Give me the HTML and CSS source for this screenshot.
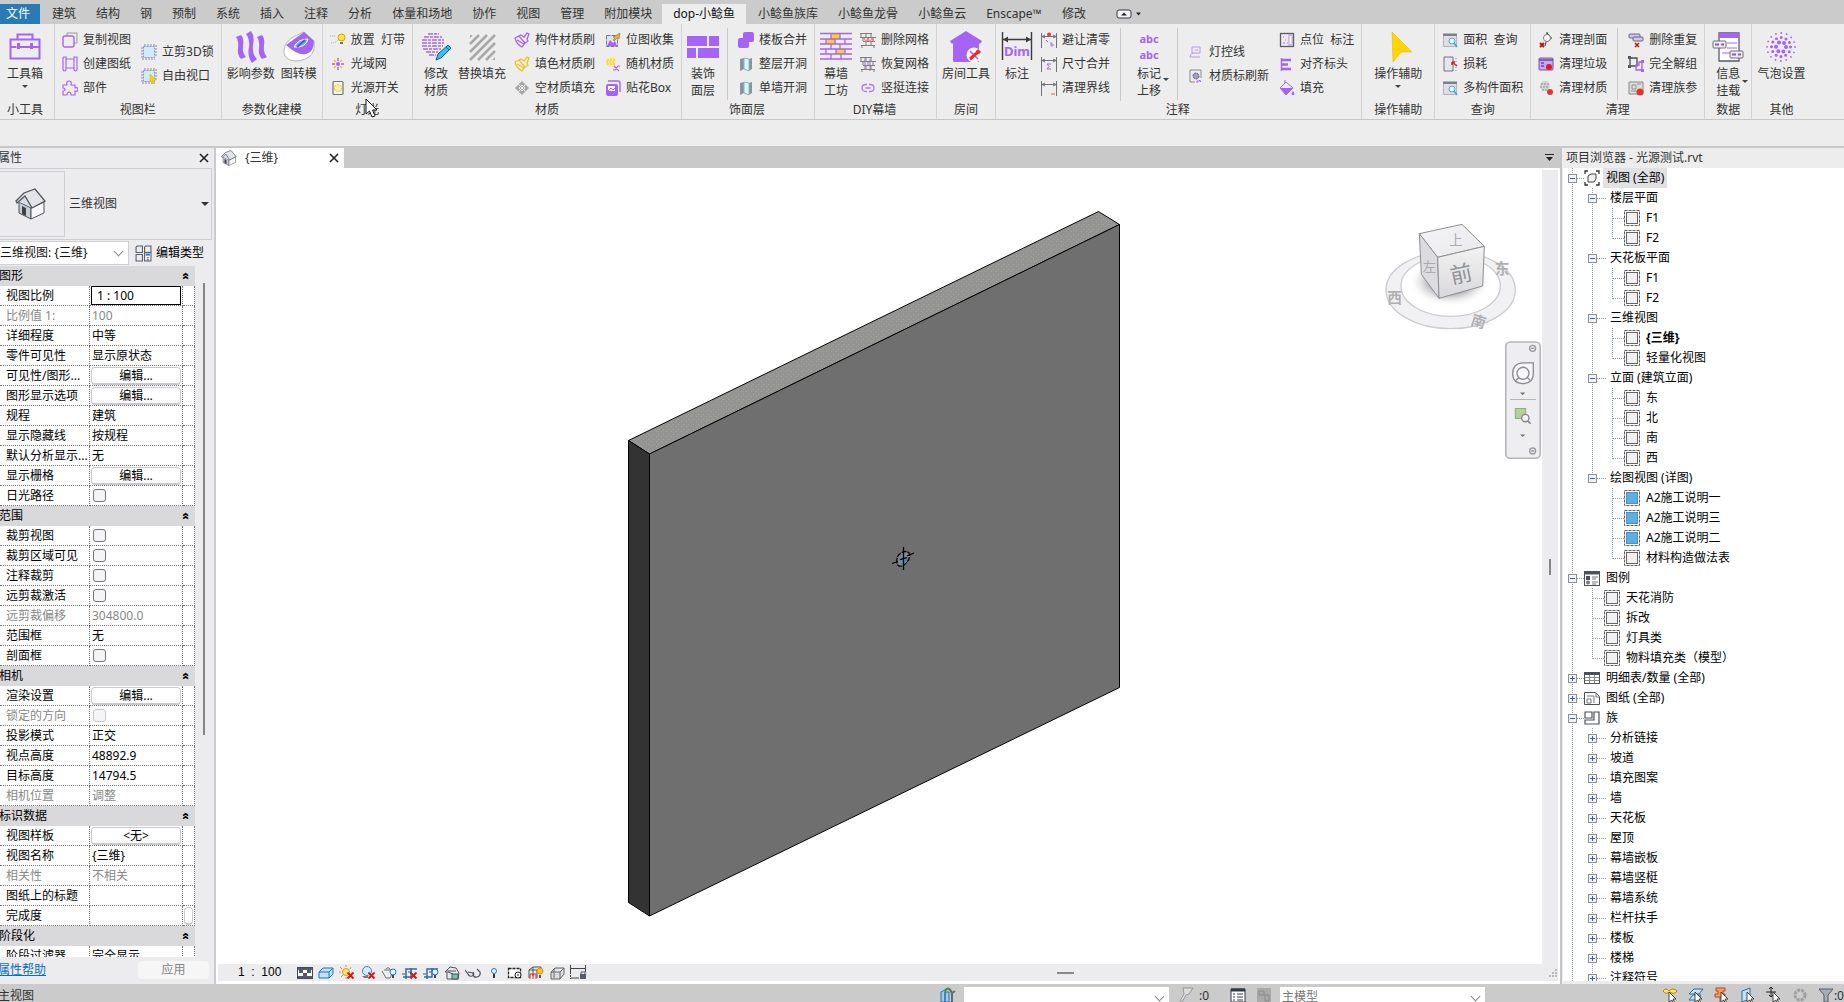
FILE: index.html
```html
<!DOCTYPE html>
<html lang="zh-CN">
<head>
<meta charset="utf-8">
<title>光源测试.rvt - {三维}</title>
<link rel="stylesheet" href="styles.css">
</head>
<body>
<svg class="defs" aria-hidden="true">
  <defs>
    <linearGradient id="cubeTop" x1="0" y1="0" x2="1" y2="1"><stop offset="0" stop-color="#f4f4f6"/><stop offset="1" stop-color="#e9e9ec"/></linearGradient>
    <linearGradient id="cubeFront" x1="0" y1="0" x2="0" y2="1"><stop offset="0" stop-color="#f3f3f3"/><stop offset="1" stop-color="#d8d8db"/></linearGradient>
    <radialGradient id="cubeShade"><stop offset="0.5" stop-color="#b4b4b8"/><stop offset="1" stop-color="#fff" stop-opacity="0"/></radialGradient>
    <pattern id="speckTop" width="5" height="5" patternUnits="userSpaceOnUse"><rect width="5" height="5" fill="#949495"/><path d="M1 1h1v1H1zM3 4h1v1H3z" fill="#a9a690"/></pattern>
  </defs>
  <symbol id="copy" viewBox="0 0 16 16"><path d="M5 4V1h10v10h-3" fill="none" stroke="#999"/><rect x="1" y="4" width="11" height="11" rx="2" fill="none" stroke="#a564f7" stroke-width="1.4"/></symbol>
  <symbol id="sheet" viewBox="0 0 16 16"><path d="M4 3h8M4 12h8M1 1h3v12M1 1v12q0 2 1.500 2T4 13M12 2v11q0 2 1.500 2T15 13V1h-3z" fill="none" stroke="#a564f7" stroke-width="1.2"/></symbol>
  <symbol id="puzzle" viewBox="0 0 16 16"><path d="M1 5h4q-1-4 2-4t2 4h4v3q3-1 3 1.500T13 11v4H9q0-3-2-3t-2 3H1v-4q2 0 2-1.500T1 8z" fill="none" stroke="#a564f7" stroke-width="1.200"/></symbol>
  <symbol id="crop" viewBox="0 0 16 16"><path d="M1 3v12h13M3 1h12v12" fill="none" stroke="#8e8e96" stroke-dasharray="2 1"/><rect x="2.500" y="2.500" width="11" height="11" fill="#cdeef5" stroke="#a584e8" stroke-dasharray="2 1"/></symbol>
  <symbol id="cropsel" viewBox="0 0 16 16"><use href="#crop"/><path d="M9 6l6 6-3 .5L13 16l-4-3z" fill="#ffd000" stroke="#e0a800" stroke-width=".5"/></symbol>
  <symbol id="bulb" viewBox="0 0 16 16"><path d="M0 4h6M1 11q4 0 7-3" fill="none" stroke="#b88cf0" stroke-dasharray="1 1"/><circle cx="11.500" cy="5.500" r="3.500" fill="#ffe34a" stroke="#d9a400"/><path d="M10 10h3v2h-3z" fill="#8c7430"/></symbol>
  <symbol id="burst" viewBox="0 0 16 16"><path d="M8 2v3M8 11v3M2 8h3M11 8h3" stroke="#a564f7" stroke-width="1.500"/><path d="M4 4l2 2M10 10l2 2M12 4l-2 2M6 10l-2 2" stroke="#f0c51c" stroke-width="1.500"/><circle cx="8" cy="8" r="2" fill="#a564f7"/></symbol>
  <symbol id="switch" viewBox="0 0 16 16"><rect x="3" y="1.500" width="10" height="13" rx="1" fill="#f6f6ee" stroke="#70757d" stroke-width="1.200"/><circle cx="8" cy="8" r="3.500" fill="#fff0a0" stroke="#e9b820" stroke-dasharray="2 1"/></symbol>
  <symbol id="brush" viewBox="0 0 16 16"><path d="M1 6l4-2 6 7-3 4Q3 13 1 6zM5 4l2-1 3 2 3-4 2 1-2 5 1 2-3 2M3 8l7 4" fill="none" stroke="currentColor" stroke-width="1.300"/></symbol>
  <symbol id="diamond" viewBox="0 0 16 16"><path d="M8 1l7 7-7 7-7-7z" fill="#a7a7a7"/><path d="M4.500 4.500l7 7M11.500 4.500l-7 7M8 5l3 3-3 3-3-3z" fill="none" stroke="#eee"/></symbol>
  <symbol id="collect" viewBox="0 0 16 16"><rect x="1.500" y="3.500" width="11" height="11" fill="#e6e1f2" stroke="#777984" stroke-dasharray="4 1"/><path d="M2 14l3-6 3 3 2-2 2 5z" fill="#a564f7"/><path d="M8 5l7-4-1 6-2-1-3 3-1-1 2-2z" fill="#e8b80a" stroke="#676767" stroke-width=".5"/></symbol>
  <symbol id="random" viewBox="0 0 16 16"><circle cx="6" cy="6" r="5" fill="#ffe893"/><path d="M2 4h8M1 6h9M2 8h8" stroke="#f0c51c" stroke-dasharray="2 1"/><path d="M8 14h2l3-4h2M9 10l5 5" fill="none" stroke="#a564f7" stroke-width="1.200"/></symbol>
  <symbol id="decal" viewBox="0 0 16 16"><path d="M3 1h10q2 0 2 2v9" fill="none" stroke="#a564f7" stroke-width="1.400"/><rect x="1" y="4" width="12" height="12" rx="2" fill="#a564f7"/><rect x="3" y="6" width="7" height="5" fill="#fff"/><path d="M3 11l3-3 2 2 3-3" fill="none" stroke="#a564f7"/></symbol>
  <symbol id="union" viewBox="0 0 16 16"><path d="M7 0h7q2 0 2 2v6q0 2-2 2h-3v4q0 2-2 2H2q-2 0-2-2V8q0-2 2-2h3V2q0-2 2-2z" fill="#a564f7"/></symbol>
  <symbol id="opening" viewBox="0 0 16 16"><path d="M2 3l4-1v11l-4 2zM11 3l3-1v11l-3 2z" fill="#8d9298"/><path d="M6 2l5 1v12l-5-2z" fill="#dff5f8" stroke="#7ebccb"/></symbol>
  <symbol id="brick" viewBox="0 0 16 16"><path d="M0 1.500h12M0 5.500h16M3 9.500h12M1 13.500h14M1 2v3M6 2v3M11 2v3M3 6v3M8 6v3M13 6v3M6 10v3M11 10v3M2 14v2M14 14v2" stroke="#7d7c85" fill="none"/></symbol>
  <symbol id="brickdel" viewBox="0 0 16 16"><use href="#brick"/><path d="M4 6l2 4 2-4 2 4 2-4 2 4" fill="none" stroke="#ff6d6d"/></symbol>
  <symbol id="brickadd" viewBox="0 0 16 16"><use href="#brick"/><path d="M5 2v12M10 3v12" stroke="#9073bb"/></symbol>
  <symbol id="link" viewBox="0 0 16 16"><path d="M7 11.500H6q-4 0-4-3.500t4-3.500h1M9 4.500h1q4 0 4 3.500t-4 3.500H9M5.500 8h5" fill="none" stroke="#a97bf0" stroke-width="1.300"/></symbol>
  <symbol id="dims" viewBox="0 0 16 16"><path d="M.5 1v15M15.500 1v15M1 4.500h14M4 3L1 4.500 4 6M12 3l3 1.500L12 6" fill="none" stroke="#71717b"/></symbol>
  <symbol id="dimavoid" viewBox="0 0 16 16"><use href="#dims"/><circle cx="8" cy="2.500" r="2" fill="#f33"/><path d="M5 8l2 2M10 10v4h2v-2h-2" fill="none" stroke="#a97bf0"/></symbol>
  <symbol id="dimsum" viewBox="0 0 16 16"><use href="#dims"/><path d="M10 8H6l2 2.500L6 13h4" fill="none" stroke="#a564f7"/></symbol>
  <symbol id="dimclean" viewBox="0 0 16 16"><use href="#dims"/><path d="M10 14h4" stroke="#f55"/></symbol>
  <symbol id="lampwire" viewBox="0 0 16 16"><path d="M4 3h8v6H4zM5 9q-3 1-3 4h10M7 6h3" fill="none" stroke="#b899ed"/></symbol>
  <symbol id="matrefresh" viewBox="0 0 16 16"><path d="M7 14H2V2h11v8" fill="none" stroke="#888892"/><circle cx="8" cy="8" r="3" fill="#a99bc8" stroke="#5b5272" stroke-dasharray="2 1"/><path d="M9 15v-2h4M13 14l-2-2" stroke="#a564f7" fill="none"/></symbol>
  <symbol id="point" viewBox="0 0 16 16"><rect x="1.500" y="1.500" width="13" height="13" fill="#efeaf4" stroke="#5b5b66" stroke-width="1.300"/><path d="M4 11h2M6 8h1M4 5h1M8 11h1" stroke="#a564f7"/><rect x="10" y="3" width="3" height="10" fill="#fff" stroke="#b88cf0"/></symbol>
  <symbol id="align" viewBox="0 0 16 16"><path d="M2.500 2v13" stroke="#a564f7" stroke-width="1.500"/><path d="M3 4h9M3 8.500h6M3 13h9" stroke="#a564f7" stroke-width="2.500"/></symbol>
  <symbol id="bucket" viewBox="0 0 16 16"><path d="M1 8l6-6 7 6-7 7zM6 3V0" fill="none" stroke="#a564f7"/><path d="M1 8h13l-7 7zM14 11q3 4 0 4t0-4z" fill="#a564f7"/></symbol>
  <symbol id="area" viewBox="0 0 16 16"><rect x="1.500" y="1.500" width="13" height="13" fill="#dde0e6" stroke="#b4b6bd"/><path d="M1 3h14" stroke="#808089" stroke-width="2"/><circle cx="10" cy="9" r="3" fill="#eaf8ff" stroke="#45a6dc"/><path d="M12 11l3 4" stroke="#45a6dc" stroke-width="1.500"/></symbol>
  <symbol id="loss" viewBox="0 0 16 16"><path d="M2 1h9v14H2z" fill="#e6e6ec" stroke="#74747c"/><path d="M14 2v13" stroke="#a564f7" stroke-dasharray="1 2"/><path d="M10 6l5 4M10 6h3M10 6v3" stroke="#d22" stroke-width="1.500"/></symbol>
  <symbol id="section" viewBox="0 0 16 16"><path d="M9 1l5 5-5 4z" fill="#fff" stroke="#777"/><circle cx="9" cy="6" r="3.500" fill="#fff" stroke="#777"/><path d="M9 0v2M8 10l-1 4" stroke="#333"/><path d="M2 11l4 4M6 11l-4 4" stroke="#b11" stroke-width="1.800"/></symbol>
  <symbol id="trash" viewBox="0 0 16 16"><rect x="1" y="2" width="14" height="12" rx="1" fill="#c6a7f5" stroke="#73569f"/><path d="M1 4h14M3 7h3M3 10h3" stroke="#7048a8" stroke-width="1.500"/><circle cx="11" cy="11" r="3" fill="#e11b1b"/></symbol>
  <symbol id="cleanmat" viewBox="0 0 16 16"><circle cx="7" cy="6" r="5" fill="#d2d2d2"/><path d="M3 4h8M2 7h9M4 10h6" stroke="#929292" stroke-dasharray="2 1"/><circle cx="12" cy="12" r="3" fill="#e3342c"/></symbol>
  <symbol id="dup" viewBox="0 0 16 16"><rect x="1" y="2" width="11" height="4" rx="1" fill="#d3c4ec" stroke="#6c6580"/><rect x="5" y="5" width="10" height="4" rx="1" fill="#d3c4ec" stroke="#6c6580"/><path d="M7 11l4 4M11 11l-4 4" stroke="#c11" stroke-width="1.500"/></symbol>
  <symbol id="ungroup" viewBox="0 0 16 16"><path d="M2 2h7v8H2z" fill="none" stroke="#4c4c58" stroke-width="1.300"/><path d="M8 14v-5h3V6h3v8z" fill="none" stroke="#a564f7" stroke-width="1.400"/><path d="M0 0h3v3H0zM0 9h3v3H0z" fill="#555560"/><path d="M13 4h3v3h-3zM13 13h3v3h-3z" fill="#a564f7"/></symbol>
  <symbol id="cleanfam" viewBox="0 0 16 16"><path d="M1 2h14v12H1z" fill="#ddd" stroke="#888"/><path d="M4 5h4v4H4zM9 4h4M3 11h6" fill="none" stroke="#929292"/><circle cx="12" cy="12" r="3.500" fill="#e3342c"/></symbol>

  <symbol id="toolbox" viewBox="0 0 32 32"><path d="M1.500 8.500h29v19h-29zM1.500 16h6M11 16h10M24 16h6M8.500 8V3.500h15V8" fill="none" stroke="#a564f7" stroke-width="2"/><path d="M8 12h3v6H8zM21 12h3v6h-3z" fill="#a564f7"/></symbol>
  <symbol id="waves" viewBox="0 0 32 32"><path d="M1 6l5-2q3 3 2 10-1 8 3 12l-5 2q-4-4-3-11 1-7-2-11z" fill="#a564f7"/><path d="M11 3l5-3q4 5 2 14-1 9 4 14l-5 4q-5-7-3-16 1-8-3-13zM22 6l5-2q3 3 2 10-1 8 3 12l-5 2q-4-4-3-11 1-7-2-11z" fill="#a564f7"/></symbol>
  <symbol id="map" viewBox="0 0 32 32"><path d="M1 19Q2 11 10 6L21 1l10 9q2 10-5 16-9 6-19 3-7-3-6-10z" fill="#fff" stroke="#b8b8b8"/><path d="M3 14L21 1l10 9q0 11-8 13-8 2-20-9z" fill="#a564f7"/><path d="M11 16q4-8 14-8-2 9-14 8z" fill="#35d4f5" stroke="#fff"/><path d="M14 16l8-7" stroke="#7d3fd0" stroke-width="2"/></symbol>
  <symbol id="material" viewBox="0 0 32 32"><path d="M8 3h11M4 6h18M2 9h22M2 12h22M2 15h21M3 18h18M6 21h12M9 24h7" fill="none" stroke="#a36be8" stroke-width="1.500" stroke-dasharray="5 1 3 1"/><path d="M16 29l2-6 10-9 3 3-10 10z" fill="#2cc4f2" stroke="#225b9a"/><path d="M26 16l3 3" stroke="#225b9a"/></symbol>
  <symbol id="hatch" viewBox="0 0 32 32"><path d="M4 13L13 4M4 21L21 4M4 29L29 4M12 29L29 12M20 29l9-9" stroke="#a6a8aa" stroke-width="2.500"/><path d="M4 4h3l-3 3zM29 29h-3l3-3z" fill="#a6a8aa"/></symbol>
  <symbol id="finish" viewBox="0 0 32 32"><path d="M0 5h20v10H0zM22 5h10v10H22zM0 17h9v10H0zM11 17h21v10H11z" fill="#a564f7"/></symbol>
  <symbol id="curtain" viewBox="0 0 32 32"><path d="M11 3h9v5h-9zM6 8h9v5H6zM16 18h9v5h-9z" fill="#ffd21a"/><path d="M0 2.500h32M0 8h32M0 13h32M0 18h32M0 23h32M0 28h32M11 3v5M20 3v5M6 8v5M15 8v5M25 8v5M11 13v5M20 13v5M6 18v5M16 18v5M25 18v5M11 23v5M21 23v5" stroke="#a564f7" stroke-width="1.300"/></symbol>
  <symbol id="room" viewBox="0 0 32 32"><path d="M16 0l16 10-2 3-1-1v18q0 1-1 1H4q-1 0-1-1V12l-1 1-2-3z" fill="#a564f7"/><circle cx="24" cy="24" r="7.500" fill="#fff"/><path d="M20 20l8 8M28 20l-8 9" stroke="#a564f7" stroke-width="1.500"/><path d="M20 28l8-7M27 19l3 3" stroke="#f22" stroke-width="3"/></symbol>
  <symbol id="arrow" viewBox="0 0 32 32"><path d="M10 1l20 20H19L11 31z" fill="#ffd600" stroke="#e0b300" stroke-width=".5"/></symbol>
  <symbol id="info" viewBox="0 0 32 32"><path d="M7 2h20v28H7z" fill="#fff" stroke="#5a5a66" stroke-width="1.300"/><path d="M7 2h20v5H7z" fill="#a564f7"/><path d="M15 12h10M15 17h10M10 22h8" stroke="#a564f7"/><rect x="1" y="10" width="13" height="7" rx="1" fill="#eee" stroke="#6c6c78"/><rect x="18" y="20" width="13" height="7" rx="1" fill="#eee" stroke="#6c6c78"/><path d="M3 13.500h4M9 13.500h3M20 23.500h4M26 23.500h3" stroke="#8c50e0" stroke-width="2"/></symbol>
  <symbol id="bubble" viewBox="0 0 32 32"><g fill="none" stroke="#a564f7" stroke-linecap="round"><circle cx="16" cy="16" r="5" stroke-width="4" stroke-dasharray="0 5.230"/><circle cx="16" cy="16" r="9.500" stroke-width="3" stroke-dasharray="0 4.970"/><circle cx="16" cy="16" r="14" stroke-width="1.800" stroke-dasharray="0 5.490"/></g></symbol>
  <symbol id="house" viewBox="0 0 32 32"><path d="M4 14l12 6v11L4 25z" fill="#c9ccd4" stroke="#4d525b"/><path d="M16 20l13-6v11l-13 6z" fill="#f7f7fa" stroke="#4d525b"/><path d="M4 14l6-7 8 12z" fill="#d9dbe2"/><path d="M1 13L9 5l11-4 10 12-13 7-7-12-8 7z" fill="#e3e4ea" stroke="#4d525b" stroke-width="1.300"/><path d="M7 18l4 2v8l-4-2z" fill="#3c4048"/></symbol>
  <symbol id="edittype" viewBox="0 0 16 16"><path d="M1 2l1-1h5v6H1zM9 7V2l1-1h5v6M1 9h6v6H1z" fill="none" stroke="#555c66"/><rect x="9" y="7" width="6" height="8" fill="#fff" stroke="#555c66"/><path d="M10 9h4" stroke="#2d79c4" stroke-width="2"/><path d="M11 12h2M11 14h2" stroke="#555c66"/></symbol>

  <symbol id="leaf" viewBox="0 0 16 16"><rect x=".5" y=".5" width="15" height="15" fill="#fff" stroke="#5d5d5d" stroke-dasharray="3 1"/><rect x="2.500" y="2.500" width="11" height="11" fill="#f1f1f3" stroke="#666"/></symbol>
  <symbol id="leafblue" viewBox="0 0 16 16"><rect x=".5" y=".5" width="15" height="15" fill="#fff" stroke="#5d5d5d" stroke-dasharray="3 1"/><rect x="2.500" y="2.500" width="11" height="11" fill="#5faee3" stroke="#4a90c0"/></symbol>
  <symbol id="views" viewBox="0 0 16 16"><path d="M1 4V1h3M12 1h3v3M15 12v3h-3M4 15H1v-3" fill="none" stroke="#333" stroke-width="1.300"/><path d="M4 6l3-2h5v5l-2 3H4z" fill="#f0f0f3" stroke="#444" stroke-linejoin="round"/></symbol>
  <symbol id="legend" viewBox="0 0 16 16"><rect x=".5" y="1.500" width="15" height="14" fill="#fff" stroke="#4b505a"/><path d="M1 3h14" stroke="#4b505a" stroke-width="3"/><path d="M2 6h4v4H2z" fill="#4b505a"/><circle cx="4" cy="12.500" r="2" fill="#777"/><path d="M8 7h6M8 9h4M8 12h6M8 14h4" stroke="#777"/></symbol>
  <symbol id="schedule" viewBox="0 0 16 16"><rect x=".5" y="2.500" width="15" height="11" fill="#fff" stroke="#4b505a"/><path d="M1 4h14" stroke="#4b505a" stroke-width="2"/><path d="M1 7.500h14M1 10.500h14M5.500 5v8M10.500 5v8" stroke="#888"/></symbol>
  <symbol id="drawing" viewBox="0 0 16 16"><path d="M.5 2.500h11l4 4v8H.5z" fill="#fff" stroke="#4b505a"/><path d="M3 6h7v7M3 9h4v4H3zM12 3v4h3" fill="none" stroke="#777"/></symbol>
  <symbol id="family" viewBox="0 0 16 16"><path d="M1 2h7v6H1zM10 2h5v12H1v-4h9z" fill="#fff" stroke="#4b505a" stroke-width="1.200"/></symbol>

  <symbol id="v1" viewBox="0 0 16 16"><rect x=".5" y="2.500" width="15" height="11" fill="#fff" stroke="#444a54"/><path d="M1 3h14v2H1zM2 5h4v3H2zM10 5h4v3h-4zM6 8h4v3H6zM1 11h14v2H1z" fill="#555b66"/></symbol>
  <symbol id="v2" viewBox="0 0 16 16"><path d="M1 7l4-4h10v6l-4 4H1z" fill="#bfe2f7" stroke="#2277b8"/><path d="M1 7h10l4-4M11 7v6" fill="none" stroke="#2277b8"/></symbol>
  <symbol id="redx" viewBox="0 0 16 16"><path d="M8.500 7.500l6 6M14.500 7.500l-6 6" stroke="#c81e1e" stroke-width="2"/></symbol>
  <symbol id="v3" viewBox="0 0 16 16"><circle cx="7" cy="7" r="3.500" fill="#ffe27a" stroke="#e09820"/><path d="M7 0v2M1 2l2 2M0 7h2M2 12l2-2M12 2l-1 2M7 12v2" stroke="#e09820"/><use href="#redx"/></symbol>
  <symbol id="v4" viewBox="0 0 16 16"><circle cx="7" cy="6" r="4.500" fill="#d7ecfa" stroke="#4382b8"/><path d="M2 11h6v2H4z" fill="#777"/><use href="#redx"/></symbol>
  <symbol id="bulbb" viewBox="0 0 16 16"><circle cx="12" cy="7" r="3" fill="#e3f3fd" stroke="#2277b8"/><path d="M11 10h2v3h-2z" fill="#445"/></symbol>
  <symbol id="v5" viewBox="0 0 16 16"><path d="M3 5h8v4l-2 4H5L1 6M5 4q2-3 4 0" fill="#eee" stroke="#666c76"/><use href="#bulbb"/></symbol>
  <symbol id="cropv" viewBox="0 0 16 16"><path d="M4 14V4h11M1 12h8V3" fill="none" stroke="#2a6da8" stroke-width="1.500"/><path d="M0 9h3M6 7h4" stroke="#555"/></symbol>
  <symbol id="v6" viewBox="0 0 16 16"><use href="#cropv"/><use href="#redx"/></symbol>
  <symbol id="v7" viewBox="0 0 16 16"><use href="#cropv"/><use href="#bulbb"/></symbol>
  <symbol id="v8" viewBox="0 0 16 16"><path d="M1 7l5-5 6 1 3 5-1 6H3V7zM4 7l5 2M3 6h9" fill="#e8e9ee" stroke="#4d525b"/><rect x="8" y="9" width="6" height="5" fill="#89b8a8" stroke="#2f5d54"/></symbol>
  <symbol id="v9" viewBox="0 0 16 16"><path d="M0 5l3 4q1 3 4 2t1-4M8 8q0 5 4 4t3-5l-3-3M3 7l5 1" fill="none" stroke="#4d525b" stroke-width="1.200"/></symbol>
  <symbol id="v10" viewBox="0 0 16 16"><circle cx="8" cy="6" r="2.500" fill="#e3f3fd" stroke="#2277b8"/><path d="M7 9h2v4H7z" fill="#334"/></symbol>
  <symbol id="v11" viewBox="0 0 16 16"><path d="M1.500 3.500h12v9h-12z" fill="#fff" stroke="#222" stroke-width="1.300" stroke-dasharray="3 1"/><circle cx="11" cy="10" r="3" fill="#fff" stroke="#222"/><path d="M10 10h2" stroke="#222"/></symbol>
  <symbol id="v12" viewBox="0 0 16 16"><path d="M1 13V5l4-3h8v6M1 5h8v8M5 2v9" fill="none" stroke="#555"/><path d="M2 14v-5h6v5M5 9v5" fill="none" stroke="#c33"/><circle cx="12" cy="6" r="3" fill="#ffc63a" stroke="#e08a10"/><path d="M11 10h2v3h-2z" fill="#555"/></symbol>
  <symbol id="v13" viewBox="0 0 16 16"><path d="M2 7l4-4h9v6l-4 5H2zM2 7h9l4-4M11 7v7M5 4v9" fill="#ddd" stroke="#666"/></symbol>
  <symbol id="v14" viewBox="0 0 16 16"><path d="M.5 0v7M15.500 0v7M1 3.500h14M1 13h8" fill="none" stroke="#444"/><path d="M.5 7v7" stroke="#444" stroke-dasharray="2 1"/><rect x="10" y="9" width="6" height="5" fill="#555b66"/><path d="M11 9V7h4v2" fill="none" stroke="#555b66"/></symbol>

  <symbol id="pick" viewBox="0 0 16 16"><path d="M7 5l7 7h-3l2 4h-2l-1-3-3 2z" fill="#fff" stroke="#333" stroke-width=".9"/></symbol>
  <symbol id="s1" viewBox="0 0 16 16"><path d="M1 5l4-2v12H1zM5 5h4v10H5z" fill="#9dcbe8" stroke="#2a6da8"/><path d="M5 4q3-5 6 0" fill="none" stroke="#3b8a3a" stroke-width="2"/><path d="M12 6v9M10 3l2 3 3-2" fill="none" stroke="#5b6b78" stroke-width="2"/></symbol>
  <symbol id="s2" viewBox="0 0 16 16"><path d="M5 1h10l-4 6-3 1-4 7-2-1 4-7z" fill="#ddd" stroke="#999"/></symbol>
  <symbol id="s3" viewBox="0 0 16 16"><path d="M1 2h14v13H1z" fill="#fff" stroke="#333a44"/><path d="M1 3h14" stroke="#333a44" stroke-width="3"/><path d="M3 7h2M3 10h2M3 13h2M7 7h6M7 10h6M7 13h6" stroke="#333a44"/></symbol>
  <symbol id="s4" viewBox="0 0 16 16"><path d="M1 1h14v15H1z" fill="#aaa"/><path d="M3 4h5v4H3zM9 8h4v6H9z" fill="none" stroke="#888"/></symbol>
  <symbol id="s5" viewBox="0 0 16 16"><path d="M1 4q3-4 6 0 4-4 8 0-3 4-7 1-4 3-7-1z" fill="#ffe36a" stroke="#b58a00"/><use href="#pick"/></symbol>
  <symbol id="s6" viewBox="0 0 16 16"><path d="M6 2h9l-4 5H1zM5 8h8l-3 5H1z" fill="#c6e2f5" stroke="#2a6da8"/><use href="#pick"/></symbol>
  <symbol id="s7" viewBox="0 0 16 16"><path d="M2 1h9v3H9v3h2v3H1V7h3V4H2zM6 10v5" fill="#ff9a62" stroke="#b5481a"/><use href="#pick"/></symbol>
  <symbol id="s8" viewBox="0 0 16 16"><path d="M2 4l8-3v11l-8 3z" fill="#bfe0f5" stroke="#2a6da8"/><use href="#pick"/></symbol>
  <symbol id="s9" viewBox="0 0 16 16"><path d="M5 0v10M0 5h10M3 2l2-2 2 2M3 8l2 2 2-2" fill="none" stroke="#222"/><use href="#pick"/></symbol>
  <symbol id="s10" viewBox="0 0 16 16"><circle cx="8" cy="8" r="5" fill="none" stroke="#a0a0a0" stroke-width="3" stroke-dasharray="3 1"/></symbol>
  <symbol id="s11" viewBox="0 0 16 16"><path d="M1 2h14l-5 6v7H6V8z" fill="#a7adb5" stroke="#555b64"/></symbol>
</svg>

<header>
  <nav class="tabs">
    <button class="tab file">文件</button><button class="tab">建筑</button><button class="tab">结构</button><button class="tab">钢</button><button class="tab">预制</button><button class="tab">系统</button><button class="tab">插入</button><button class="tab">注释</button><button class="tab">分析</button><button class="tab">体量和场地</button><button class="tab">协作</button><button class="tab">视图</button><button class="tab">管理</button><button class="tab">附加模块</button><button class="tab active">dop-小鲶鱼</button><button class="tab">小鲶鱼族库</button><button class="tab">小鲶鱼龙骨</button><button class="tab">小鲶鱼云</button><button class="tab">Enscape™</button><button class="tab">修改</button>
    <button class="minimize" aria-label="最小化功能区"><svg width="26" height="10" viewBox="0 0 26 10"><rect x="1" y="1" width="14" height="8" rx="2" fill="#f4f4f4" stroke="#333b47"/><path d="M5 6.500h6L8 3.500zM20 3.500h5l-2.500 3z" fill="#222"/></svg></button>
  </nav>

  <div class="ribbon">
    <section class="panel first">
      <div class="tools"><button class="big"><svg><use href="#toolbox"/></svg>工具箱<span class="caret"></span></button></div>
      <h2>小工具</h2>
    </section>
    <section class="panel wide">
      <div class="tools">
        <div class="col"><button class="small"><svg><use href="#copy"/></svg>复制视图</button><button class="small"><svg><use href="#sheet"/></svg>创建图纸</button><button class="small"><svg><use href="#puzzle"/></svg>部件</button></div>
        <div class="col next"><button class="small"><svg><use href="#crop"/></svg>立剪3D锁</button><button class="small"><svg><use href="#cropsel"/></svg>自由视口</button></div>
      </div>
      <h2>视图栏</h2>
    </section>
    <section class="panel">
      <div class="tools"><button class="big"><svg><use href="#waves"/></svg>影响参数</button><button class="big after"><svg><use href="#map"/></svg>图转模</button></div>
      <h2>参数化建模</h2>
    </section>
    <section class="panel wide">
      <div class="tools"><div class="col"><button class="small"><svg><use href="#bulb"/></svg>放置 &nbsp;灯带</button><button class="small"><svg><use href="#burst"/></svg>光域网</button><button class="small"><svg><use href="#switch"/></svg>光源开关</button></div></div>
      <h2>灯光</h2>
    </section>
    <section class="panel wide">
      <div class="tools">
        <button class="big"><svg><use href="#material"/></svg>修改<br>材质</button><button class="big after"><svg><use href="#hatch"/></svg>替换填充</button>
        <div class="col near"><button class="small purple"><svg><use href="#brush"/></svg>构件材质刷</button><button class="small yellow"><svg><use href="#brush"/></svg>填色材质刷</button><button class="small"><svg><use href="#diamond"/></svg>空材质填充</button></div>
        <div class="col next"><button class="small"><svg><use href="#collect"/></svg>位图收集</button><button class="small"><svg><use href="#random"/></svg>随机材质</button><button class="small"><svg><use href="#decal"/></svg>贴花Box</button></div>
      </div>
      <h2>材质</h2>
    </section>
    <section class="panel mixed">
      <div class="tools">
        <button class="big"><svg><use href="#finish"/></svg>装饰<br>面层</button>
        <div class="col split near"><button class="small"><svg><use href="#union"/></svg>楼板合并</button><button class="small"><svg><use href="#opening"/></svg>整层开洞</button><button class="small"><svg><use href="#opening"/></svg>单墙开洞</button></div>
      </div>
      <h2>饰面层</h2>
    </section>
    <section class="panel mixed">
      <div class="tools">
        <button class="big"><svg><use href="#curtain"/></svg>幕墙<br>工坊</button>
        <div class="col near"><button class="small"><svg><use href="#brickdel"/></svg>删除网格</button><button class="small"><svg><use href="#brickadd"/></svg>恢复网格</button><button class="small"><svg><use href="#link"/></svg>竖挺连接</button></div>
      </div>
      <h2>DIY幕墙</h2>
    </section>
    <section class="panel">
      <div class="tools"><button class="big"><svg><use href="#room"/></svg>房间工具</button></div>
      <h2>房间</h2>
    </section>
    <section class="panel mixed">
      <div class="tools">
        <button class="big"><svg viewBox="0 0 32 32"><path d="M1.500 1v28M30.500 1v28M2 8.500h28" stroke="#3a3a40" stroke-width="1.400"/><path d="M2 8.500l5-3v6zM30 8.500l-5-3v6z" fill="#3a3a40"/><text x="16" y="25" class="dimtext">Dim</text></svg>标注</button>
        <div class="col near"><button class="small"><svg><use href="#dimavoid"/></svg>避让清零</button><button class="small"><svg><use href="#dimsum"/></svg>尺寸合并</button><button class="small"><svg><use href="#dimclean"/></svg>清理界线</button></div>
        <div class="split"><button class="big tagup"><span class="abc">abc<br>abc</span>标记<br>上移<span class="caret side"></span></button></div>
        <div class="col split"><button class="small"><svg><use href="#lampwire"/></svg>灯控线</button><button class="small"><svg><use href="#matrefresh"/></svg>材质标刷新</button></div>
        <div class="col next"><button class="small"><svg><use href="#point"/></svg>点位 &nbsp;标注</button><button class="small"><svg><use href="#align"/></svg>对齐标头</button><button class="small"><svg><use href="#bucket"/></svg>填充</button></div>
      </div>
      <h2>注释</h2>
    </section>
    <section class="panel roomy">
      <div class="tools"><button class="big"><svg><use href="#arrow"/></svg>操作辅助<span class="caret"></span></button></div>
      <h2>操作辅助</h2>
    </section>
    <section class="panel wide">
      <div class="tools"><div class="col"><button class="small"><svg><use href="#area"/></svg>面积 &nbsp;查询</button><button class="small"><svg><use href="#loss"/></svg>损耗</button><button class="small"><svg><use href="#area"/></svg>多构件面积</button></div></div>
      <h2>查询</h2>
    </section>
    <section class="panel wide">
      <div class="tools">
        <div class="col"><button class="small"><svg><use href="#section"/></svg>清理剖面</button><button class="small"><svg><use href="#trash"/></svg>清理垃圾</button><button class="small"><svg><use href="#cleanmat"/></svg>清理材质</button></div>
        <div class="col split next"><button class="small"><svg><use href="#dup"/></svg>删除重复</button><button class="small"><svg><use href="#ungroup"/></svg>完全解组</button><button class="small"><svg><use href="#cleanfam"/></svg>清理族参</button></div>
      </div>
      <h2>清理</h2>
    </section>
    <section class="panel wide">
      <div class="tools"><button class="big"><svg><use href="#info"/></svg>信息<br>挂载<span class="caret side"></span></button></div>
      <h2>数据</h2>
    </section>
    <section class="panel last">
      <div class="tools"><button class="big"><svg><use href="#bubble"/></svg>气泡设置</button></div>
      <h2>其他</h2>
    </section>
  </div>
  <div class="options"></div>
</header>

<main>
  <aside class="props">
    <div class="ptitle"><span>属性</span><button class="close" aria-label="关闭属性"><svg width="10" height="10" viewBox="0 0 10 10"><path d="M1 1l8 8M9 1L1 9" stroke="#222" stroke-width="1.600"/></svg></button></div>
    <button class="typesel"><span class="thumb"><svg width="32" height="32"><use href="#house"/></svg></span><span class="tname">三维视图</span><span class="tri"></span></button>
    <div class="instance">
      <span class="combo"><select aria-label="实例"><option>三维视图: {三维}</option></select></span>
      <button class="edit"><svg width="17" height="17"><use href="#edittype"/></svg>编辑类型</button>
    </div>
    <div class="grid">
      <table>
        <colgroup><col class="c1"><col class="c2"><col class="c3"></colgroup>
        <tbody>
          <tr class="head"><th colspan="3">图形<span>»</span></th></tr>
          <tr><td><label for="scale">视图比例</label></td><td class="edge"><input type="text" id="scale" value="1 : 100"></td><td></td></tr>
          <tr class="off"><td>比例值 1:</td><td>100</td><td></td></tr>
          <tr><td>详细程度</td><td>中等</td><td></td></tr>
          <tr><td>零件可见性</td><td>显示原状态</td><td></td></tr>
          <tr><td>可见性/图形...</td><td class="edge"><button>编辑...</button></td><td></td></tr>
          <tr><td>图形显示选项</td><td class="edge"><button>编辑...</button></td><td></td></tr>
          <tr><td>规程</td><td>建筑</td><td></td></tr>
          <tr><td>显示隐藏线</td><td>按规程</td><td></td></tr>
          <tr><td>默认分析显示...</td><td>无</td><td></td></tr>
          <tr><td>显示栅格</td><td class="edge"><button>编辑...</button></td><td></td></tr>
          <tr><td><label for="sun">日光路径</label></td><td><input type="checkbox" id="sun"></td><td></td></tr>
          <tr class="head"><th colspan="3">范围<span>»</span></th></tr>
          <tr><td><label for="cv">裁剪视图</label></td><td><input type="checkbox" id="cv"></td><td></td></tr>
          <tr><td><label for="cr">裁剪区域可见</label></td><td><input type="checkbox" id="cr"></td><td></td></tr>
          <tr><td><label for="ca">注释裁剪</label></td><td><input type="checkbox" id="ca"></td><td></td></tr>
          <tr><td><label for="fc">远剪裁激活</label></td><td><input type="checkbox" id="fc"></td><td></td></tr>
          <tr class="off"><td>远剪裁偏移</td><td>304800.0</td><td></td></tr>
          <tr><td>范围框</td><td>无</td><td></td></tr>
          <tr><td><label for="sb">剖面框</label></td><td><input type="checkbox" id="sb"></td><td></td></tr>
          <tr class="head"><th colspan="3">相机<span>»</span></th></tr>
          <tr><td>渲染设置</td><td class="edge"><button>编辑...</button></td><td></td></tr>
          <tr class="off"><td><label for="lo">锁定的方向</label></td><td><input type="checkbox" id="lo" disabled></td><td></td></tr>
          <tr><td>投影模式</td><td>正交</td><td></td></tr>
          <tr><td>视点高度</td><td>48892.9</td><td></td></tr>
          <tr><td>目标高度</td><td>14794.5</td><td></td></tr>
          <tr class="off"><td>相机位置</td><td>调整</td><td></td></tr>
          <tr class="head"><th colspan="3">标识数据<span>»</span></th></tr>
          <tr><td>视图样板</td><td class="edge"><button>&lt;无&gt;</button></td><td></td></tr>
          <tr><td>视图名称</td><td>{三维}</td><td></td></tr>
          <tr class="off"><td>相关性</td><td>不相关</td><td></td></tr>
          <tr><td>图纸上的标题</td><td></td><td></td></tr>
          <tr><td>完成度</td><td></td><td class="edge"><button aria-label="浏览"></button></td></tr>
          <tr class="head"><th colspan="3">阶段化<span>»</span></th></tr>
          <tr><td>阶段过滤器</td><td>完全显示</td><td></td></tr>
        </tbody>
      </table>
      <div class="scroll"><div></div></div>
    </div>
    <div class="pfoot"><a href="#help">属性帮助</a><button disabled>应用</button></div>
  </aside>

  <section class="doc">
    <div class="doctabs">
      <div class="doctab"><svg width="16" height="16"><use href="#house"/></svg><span>{三维}</span><button class="close" aria-label="关闭视图"><svg width="10" height="10" viewBox="0 0 10 10"><path d="M1 1l8 8M9 1L1 9" stroke="#222" stroke-width="1.600"/></svg></button></div>
      <button class="tablist" aria-label="视图列表"><svg width="9" height="8" viewBox="0 0 9 8"><path d="M0 .5h9" stroke="#222"/><path d="M1 3h7L4.500 7z" fill="#222"/></svg></button>
    </div>
    <div class="view">
      <div class="canvas">
        <svg class="wall" width="494" height="708" viewBox="627 210 494 708" role="img" aria-label="三维墙体">
          <g stroke="#000" stroke-width="1" stroke-linejoin="round">
            <path d="M628.500 440.500L1098.500 211.500l21 13-470 229.500z" fill="url(#speckTop)"/>
            <path d="M628.500 440.500l21 13.500v462l-21-13.500z" fill="#333"/>
            <path d="M649.500 454l470-229.500v463L649.500 916z" fill="#6f6f6f"/>
          </g>
          <path d="M897 563q-1-7 4-10t8 0q2 4-2 9t-8 4q-2-1-2-3z" fill="#7f8790" stroke="#000" stroke-width="1.300" stroke-dasharray="5 1"/>
          <path d="M899 564q7 1 8-7" fill="none" stroke="#4c8bc8" stroke-width="2"/>
          <path d="M903.500 547v23M892 563.500l6-2M907 556l7-3M900 559.500l7-2" stroke="#000" stroke-width="1.300"/>
        </svg>
        <svg class="cube" width="140" height="115" viewBox="60 240 420 345" role="img" aria-label="ViewCube">
          <ellipse cx="272" cy="450" rx="194" ry="116" fill="#f1f1f4" stroke="#cfcbd0" stroke-width="4"/>
          <ellipse cx="272" cy="438" rx="149" ry="91" fill="#fff" stroke="#cfcbd0" stroke-width="4"/>
          <ellipse cx="270" cy="425" rx="125" ry="75" fill="url(#cubeShade)"/>
          <g class="compass"><text x="82" y="490">西</text><text x="334" y="560" transform="rotate(18 354 545)">南</text><text x="404" y="402">东</text></g>
          <g stroke="#8f8f93" stroke-width="3" stroke-linejoin="round"><path d="M178 281l128-28 67 66-140 33z" fill="url(#cubeTop)"/><path d="M178 281l55 71 4 123-53-72z" fill="#dcdce0"/><path d="M233 352l140-33-5 119-131 37z" fill="url(#cubeFront)"/></g>
          <text class="front" x="270" y="426" transform="rotate(-12 300 400)">前</text>
          <text class="side" x="188" y="396">左</text><text class="side" x="268" y="316">上</text>
        </svg>
        <svg class="navbar" width="36" height="118" viewBox="435 602 108 355" role="img" aria-label="导航栏">
          <rect x="437" y="605" width="104" height="350" rx="14" fill="#eeeef0" stroke="#b5b5bb" stroke-width="5"/>
          <g fill="none" stroke="#99999f" stroke-width="4"><circle cx="518" cy="624" r="9"/><circle cx="518" cy="933" r="9"/><path d="M513 624h10M513 933h10"/></g>
          <path d="M520 668v32q0 30-31 30t-31-30 31-32z" fill="#f7f7f9" stroke="#8c8c92" stroke-width="4"/><circle cx="489" cy="699" r="18" fill="none" stroke="#8c8c92" stroke-width="4"/><path d="M468 720l8-8M510 720l-8-8" stroke="#8c8c92" stroke-width="4"/>
          <path d="M480 757h16l-8 8zM480 883h16l-8 8z" fill="#777"/><path d="M450 778h78" stroke="#b5b5bb" stroke-width="3"/>
          <rect x="466" y="805" width="31" height="30" fill="#b3d09d" stroke="#8bb074" stroke-width="3"/><circle cx="496" cy="834" r="11" fill="#f4f4f6" stroke="#85858b" stroke-width="4"/><path d="M504 843l8 8" stroke="#85858b" stroke-width="5"/>
        </svg>
      </div>
      <div class="vscroll"><div></div></div>
    </div>
    <div class="viewbar">
      <span class="scale">1&nbsp; :&nbsp; 100</span>
      <span class="vicons"><svg><use href="#v1"/></svg><svg><use href="#v2"/></svg><svg><use href="#v3"/></svg><svg><use href="#v4"/></svg><svg><use href="#v5"/></svg><svg><use href="#v6"/></svg><svg><use href="#v7"/></svg><svg><use href="#v8"/></svg><svg><use href="#v9"/></svg><svg><use href="#v10"/></svg><svg><use href="#v11"/></svg><svg><use href="#v12"/></svg><svg><use href="#v13"/></svg><svg><use href="#v14"/></svg></span>
      <span class="hscroll"><span></span></span>
      <svg class="grip" width="10" height="10" viewBox="0 0 10 10"><path d="M7 1h2v2H7zM4 4h2v2H4zM7 4h2v2H7zM1 7h2v2H1zM4 7h2v2H4zM7 7h2v2H7z" fill="#b9b9b9"/></svg>
    </div>
  </section>

  <aside class="browser">
    <h2>项目浏览器 - 光源测试.rvt</h2>
    <div class="treebox">
      <ul class="tree more">
        <li><button class="exp" aria-label="折叠"></button><svg><use href="#views"/></svg><span class="sel">视图 (全部)</span>
          <ul>
            <li><button class="exp" aria-label="折叠"></button><span class="cat">楼层平面</span>
              <ul><li><svg><use href="#leaf"/></svg><span>F1</span></li><li><svg><use href="#leaf"/></svg><span>F2</span></li></ul></li>
            <li><button class="exp" aria-label="折叠"></button><span class="cat">天花板平面</span>
              <ul><li><svg><use href="#leaf"/></svg><span>F1</span></li><li><svg><use href="#leaf"/></svg><span>F2</span></li></ul></li>
            <li><button class="exp" aria-label="折叠"></button><span class="cat">三维视图</span>
              <ul><li><svg><use href="#leaf"/></svg><span><b>{三维}</b></span></li><li><svg><use href="#leaf"/></svg><span>轻量化视图</span></li></ul></li>
            <li><button class="exp" aria-label="折叠"></button><span class="cat">立面 (建筑立面)</span>
              <ul><li><svg><use href="#leaf"/></svg><span>东</span></li><li><svg><use href="#leaf"/></svg><span>北</span></li><li><svg><use href="#leaf"/></svg><span>南</span></li><li><svg><use href="#leaf"/></svg><span>西</span></li></ul></li>
            <li><button class="exp" aria-label="折叠"></button><span class="cat">绘图视图 (详图)</span>
              <ul><li><svg><use href="#leafblue"/></svg><span>A2施工说明一</span></li><li><svg><use href="#leafblue"/></svg><span>A2施工说明三</span></li><li><svg><use href="#leafblue"/></svg><span>A2施工说明二</span></li><li><svg><use href="#leaf"/></svg><span>材料构造做法表</span></li></ul></li>
          </ul></li>
        <li><button class="exp" aria-label="折叠"></button><svg><use href="#legend"/></svg><span>图例</span>
          <ul><li><svg><use href="#leaf"/></svg><span>天花消防</span></li><li><svg><use href="#leaf"/></svg><span>拆改</span></li><li><svg><use href="#leaf"/></svg><span>灯具类</span></li><li><svg><use href="#leaf"/></svg><span>物料填充类（模型）</span></li></ul></li>
        <li><button class="exp plus" aria-label="展开"></button><svg><use href="#schedule"/></svg><span>明细表/数量 (全部)</span></li>
        <li><button class="exp plus" aria-label="展开"></button><svg><use href="#drawing"/></svg><span>图纸 (全部)</span></li>
        <li><button class="exp" aria-label="折叠"></button><svg><use href="#family"/></svg><span>族</span>
          <ul class="more">
            <li><button class="exp plus" aria-label="展开"></button><span class="cat">分析链接</span></li>
            <li><button class="exp plus" aria-label="展开"></button><span class="cat">坡道</span></li>
            <li><button class="exp plus" aria-label="展开"></button><span class="cat">填充图案</span></li>
            <li><button class="exp plus" aria-label="展开"></button><span class="cat">墙</span></li>
            <li><button class="exp plus" aria-label="展开"></button><span class="cat">天花板</span></li>
            <li><button class="exp plus" aria-label="展开"></button><span class="cat">屋顶</span></li>
            <li><button class="exp plus" aria-label="展开"></button><span class="cat">幕墙嵌板</span></li>
            <li><button class="exp plus" aria-label="展开"></button><span class="cat">幕墙竖梃</span></li>
            <li><button class="exp plus" aria-label="展开"></button><span class="cat">幕墙系统</span></li>
            <li><button class="exp plus" aria-label="展开"></button><span class="cat">栏杆扶手</span></li>
            <li><button class="exp plus" aria-label="展开"></button><span class="cat">楼板</span></li>
            <li><button class="exp plus" aria-label="展开"></button><span class="cat">楼梯</span></li>
            <li><button class="exp plus" aria-label="展开"></button><span class="cat">注释符号</span></li>
          </ul></li>
      </ul>
    </div>
  </aside>
</main>

<footer class="status">
  <span class="msg">主视图</span>
  <div class="center">
    <svg><use href="#s1"/></svg>
    <span class="combo"><select aria-label="活动工作集"><option></option></select></span>
    <svg class="editable"><use href="#s2"/></svg><span>:0</span>
    <svg class="opt"><use href="#s3"/></svg><svg class="opt2"><use href="#s4"/></svg>
    <span class="combo"><select aria-label="设计选项" disabled><option>主模型</option></select></span>
  </div>
  <div class="picks"><svg><use href="#s5"/></svg><svg><use href="#s6"/></svg><svg><use href="#s7"/></svg><svg><use href="#s8"/></svg><svg><use href="#s9"/></svg><svg><use href="#s10"/></svg><span class="filter"><svg><use href="#s11"/></svg>:0</span></div>
</footer>

<svg class="pointer" width="13" height="20" viewBox="0 0 13 20" aria-hidden="true"><path d="M1 1v15l3.500-3 2.500 6 3-1-2.500-6H12z" fill="#fff" stroke="#111"/></svg>
</body>
</html>
```
FILE: styles.css
```css
* { box-sizing: border-box; }

body {
  margin: 0;
  height: 100vh;
  display: flex;
  flex-direction: column;
  overflow: hidden;
  position: relative;
  background: #ededed;
  color: #333;
  font: 12px/18px "Noto Sans", "Noto Sans CJK SC", sans-serif;
}

button, input, select { font: inherit; color: inherit; margin: 0; padding: 0; border: 0; background: none; }
h2 { margin: 0; font-size: 12px; font-weight: 400; }
svg { flex: none; display: block; }
.defs { position: absolute; width: 0; height: 0; }
header, footer { flex: none; }

/* Tab strip */
.tabs { display: flex; height: 24px; padding-top: 4px; background: #cbcbcb; overflow: hidden; }
.tab { height: 20px; line-height: 20px; padding: 0 10px; white-space: nowrap; }
.tab.file { width: 40px; margin-right: 2px; padding: 0 10px 0 6px; background: #2a7ab5; color: #fff; }
.tab.active { margin-right: 2px; padding: 0 11px; background: #ededed; color: #111; }
.minimize { margin-left: 20px; display: flex; align-items: center; }

/* Ribbon */
.ribbon { display: flex; height: 96px; border-bottom: 1px solid #c8c8c8; white-space: nowrap; overflow: hidden; }
.panel { flex: none; display: flex; flex-direction: column; padding: 0 5px; border-right: 1px solid #d3d3d3; }
.panel.wide { padding: 0 7px; }
.panel.mixed { padding: 0 7px 0 5px; }
.panel.roomy { padding: 0 12px; }
.panel.first { padding: 0 11px 0 7px; }
.panel.last { border: 0; }
.panel h2 { height: 18px; line-height: 17px; text-align: center; }
.tools { display: flex; height: 77px; padding-top: 4px; }
.big { display: flex; flex-direction: column; align-items: center; padding-top: 3px; line-height: 17px; text-align: center; position: relative; min-width: 30px; }
.mixed .big { min-width: 32px; }
.big svg { width: 32px; height: 32px; margin-bottom: 2px; }
.big.after { margin-left: 6px; }
.caret { border: 3px solid transparent; border-top-color: #444; border-bottom: 0; margin-top: 3px; }
.caret.side { position: absolute; right: -4px; bottom: 18px; margin: 0; }
.abc { height: 32px; margin-bottom: 2px; line-height: 16px; font-weight: 700; font-size: 11px; color: #a564f7; }
.tagup { margin: 0 12px; }
.dimtext { font: 700 13px "Noto Sans", sans-serif; fill: #a564f7; text-anchor: middle; }
.col { display: flex; flex-direction: column; justify-content: center; height: 72px; }
.next { margin-left: 10px; }
.near { margin-left: 8px; }
.split { border-left: 1px solid #c8c8c8; }
.col.split { padding-left: 10px; }
.mixed .tools > .col:not(.split) + .split { margin-left: 10px; }
.small { display: flex; align-items: center; gap: 5px; height: 24px; text-align: left; }
.small svg { width: 16px; height: 16px; }
.small.purple svg { color: #a564f7; }
.small.yellow svg { color: #f0c51c; }
.options { height: 28px; border-bottom: 2px solid #c8c8c8; }

/* Work area */
main { flex: 1; min-height: 0; display: flex; }

.props { flex: none; width: 216px; display: flex; flex-direction: column; border-right: 2px solid #cbcbcf; background: #ececee; overflow: hidden; }
.ptitle { height: 20px; display: flex; align-items: center; justify-content: space-between; padding-right: 5px; }
.ptitle span { margin-left: -2px; }
.typesel { height: 72px; display: flex; align-items: center; margin-right: 2px; padding: 2px 2px 2px 0; border: 1px solid #cfcfd3; border-left: 0; text-align: left; }
.thumb { width: 65px; align-self: stretch; display: flex; align-items: center; justify-content: center; padding-right: 2px; border: 1px solid #cfcfd3; border-left: 0; }
.tname { flex: 1; padding-left: 4px; }
.tri { border: 4px solid transparent; border-top-color: #333; border-bottom: 0; }
.instance { height: 26px; display: flex; align-items: center; gap: 6px; }
.combo { position: relative; display: block; }
.combo select { appearance: none; width: 100%; height: 100%; background: #fff; color: #111; opacity: 1; }
.combo::after { content: ""; position: absolute; right: 6px; top: 6px; width: 6px; height: 6px; border: 1px solid #888; border-width: 0 1px 1px 0; rotate: 45deg; pointer-events: none; }
.instance .combo { width: 129px; height: 24px; border: 1px solid #d0d0d4; border-left: 0; }
.edit { display: flex; align-items: center; gap: 4px; color: #000; }
.grid { flex: 1; min-height: 0; display: flex; overflow: hidden; }
.grid table { flex: none; width: 195px; align-self: flex-start; table-layout: fixed; border-spacing: 0; background: #fff; color: #000; }
.c1 { width: 90px; }
.c2 { width: 93px; }
.c3 { width: 12px; }
.grid td { height: 20px; padding: 0 0 0 2px; line-height: 17px; border: 1px dotted #777; border-width: 0 1px 1px 0; white-space: nowrap; overflow: hidden; }
.grid td:first-child { padding-left: 6px; }
.grid td.edge { padding: 0 1px; }
.off td { color: #888; }
.head th { height: 20px; padding: 0; line-height: 20px; font-weight: 400; text-align: left; background: #d9d9db; text-indent: -1px; }
.head span { float: right; width: 20px; height: 20px; line-height: 20px; text-align: center; rotate: -90deg; font-weight: 700; text-indent: 0; }
.grid td button { display: block; width: 100%; height: 18px; line-height: 15px; border: 1px solid #c9c9cf; border-bottom-width: 2px; border-radius: 4px; background: #fff; }
.grid td input[type="text"] { display: block; width: 100%; height: 19px; padding-left: 5px; border: 1px solid #000; background: #fff; }
.grid input[type="checkbox"] { appearance: none; display: block; width: 13px; height: 13px; margin-left: 1px; border: 1px solid #74747a; border-radius: 3px; background: #f5f5f7; }
.grid input:disabled { border-color: #c9c9cd; }
.scroll { flex: 1; padding: 17px 9px 0 8px; }
.scroll div { height: 67%; background: #858585; }
.pfoot { height: 27px; display: flex; align-items: center; justify-content: space-between; padding: 0 5px 2px 0; }
.pfoot a { color: #0a6cc4; margin-left: -2px; }
.pfoot button { width: 71px; height: 18px; line-height: 16px; border-radius: 4px; background: #f6f6f7; color: #858585; }

/* Drawing view */
.doc { flex: 1; min-width: 0; display: flex; flex-direction: column; background: #fff; }
.doctabs { height: 20px; display: flex; justify-content: space-between; background: #c9c9c9; }
.doctab { width: 128px; display: flex; align-items: center; gap: 8px; padding: 0 5px; background: #fff; }
.doctab span { flex: 1; }
.tablist { padding: 0 6px; }
.view { flex: 1; min-height: 0; display: flex; padding-right: 2px; }
.canvas { flex: 1; position: relative; display: flex; align-items: center; justify-content: center; padding: 0 10px 4px 0; overflow: hidden; }
.cube { position: absolute; right: 22px; top: 52px; }
.navbar { position: absolute; right: 1px; top: 173px; }
.compass { font-size: 44px; font-weight: 700; fill: #b0b0b3; }
.front { font-size: 66px; fill: #929298; }
.side { font-size: 40px; fill: #aaaaaf; }
.vscroll { width: 16px; margin-top: 2px; background: #ececee; display: flex; align-items: center; justify-content: flex-end; padding: 0 7px; }
.vscroll div { width: 2px; height: 16px; background: #858585; }
.viewbar { height: 17px; margin: 0 2px 3px; display: flex; align-items: center; background: #ececee; }
.scale { padding-left: 20px; width: 79px; color: #000; font-family: "Liberation Sans", sans-serif; line-height: 17px; white-space: nowrap; }
.vicons { display: flex; gap: 5px; }
.vicons svg { width: 16px; height: 16px; }
.hscroll { flex: 1; display: flex; justify-content: center; padding-right: 4px; }
.hscroll span { width: 17px; height: 2px; background: #8a8a8a; }

/* Project browser */
.browser { flex: none; width: 284px; display: flex; flex-direction: column; border-left: 2px solid #c4c4c6; background: #ededed; }
.browser h2 { height: 20px; line-height: 20px; padding-left: 4px; }
.treebox { flex: 1; min-height: 0; margin: 0 0 3px 1px; overflow: hidden; background: #fff; color: #000; }
.tree, .tree ul { margin: 0; padding: 0; list-style: none; width: 100%; }
.tree li {
  --dots: #8aa0ad;
  display: flex;
  flex-wrap: wrap;
  align-items: center;
  padding-left: 21px;
  background:
    repeating-linear-gradient(90deg, var(--dots) 0 1px, transparent 1px 2px) 10px 10px / 14px 1px no-repeat,
    repeating-linear-gradient(var(--dots) 0 1px, transparent 1px 2px) 9px 0 / 1px 100% no-repeat;
}
.tree ul:not(.more) > li:last-child { background-size: 14px 1px, 1px 11px; }
.tree li > ul { flex: 0 0 calc(100% + 1px); margin-left: -1px; }
.tree svg { width: 16px; height: 16px; background: #fff; }
.tree span { line-height: 20px; padding: 0 3px; margin-left: 3px; white-space: nowrap; }
.tree .sel { background: #e1e1e3; }
.tree .exp { width: 9px; height: 9px; margin: 0 7px 0 -16px; border: 1px solid #8e8e94; background: linear-gradient(#3a5fa8, #3a5fa8) 1px 3px / 5px 1px no-repeat, #f3f3f5; }
.tree .exp.plus { background: linear-gradient(#3a5fa8, #3a5fa8) 1px 3px / 5px 1px no-repeat, linear-gradient(#3a5fa8, #3a5fa8) 3px 1px / 1px 5px no-repeat, #f3f3f5; }

/* Status bar */
.status { height: 18px; display: flex; align-items: flex-start; justify-content: space-between; padding-top: 3px; background: #cbcbcb; overflow: hidden; }
.status svg { width: 16px; height: 16px; }
.msg { flex: 0 0 940px; text-indent: -2px; }
.center { flex: 1; display: flex; }
.status .combo { width: 205px; height: 20px; }
.center .combo { margin-left: 8px; }
.center .combo select { border-right: 0; color: #777; padding-left: 2px; }
.editable { margin: 0 5px 0 9px; }
.opt { margin-left: 21px; }
.opt2 { margin-left: 10px; }
.picks { display: flex; gap: 10px; }
.filter { display: flex; }

.pointer { position: absolute; left: 365px; top: 98px; }
```
